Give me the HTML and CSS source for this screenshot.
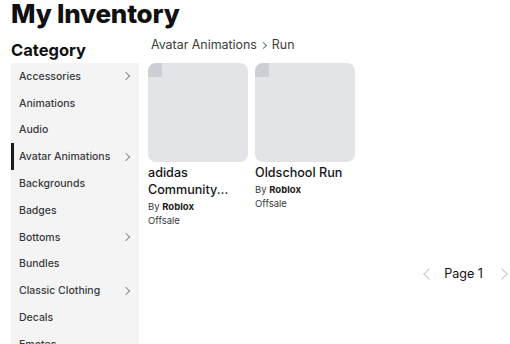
FILE: index.html
```html
<!DOCTYPE html>
<html lang="en">
<head>
    <meta charset="UTF-8">
    <meta name="viewport" content="width=device-width, initial-scale=1.0">
    <title>My Inventory</title>
    <link rel="stylesheet" href="styles.css">
</head>
<body>
    <div class="page">
        <h1>My Inventory</h1>

        <div class="layout">
            <aside class="sidebar">
                <h2>Category</h2>
                <ul class="category-list">
                    <li>Accessories <span class="chevron"></span></li>
                    <li>Animations</li>
                    <li>Audio</li>
                    <li class="active">Avatar Animations <span class="chevron"></span></li>
                    <li>Backgrounds</li>
                    <li>Badges</li>
                    <li>Bottoms <span class="chevron"></span></li>
                    <li>Bundles</li>
                    <li>Classic Clothing <span class="chevron"></span></li>
                    <li>Decals</li>
                    <li>Emotes</li>
                </ul>
            </aside>

            <main class="content">
                <div class="breadcrumb">
                    <span>Avatar Animations</span>
                    <span class="crumb-sep"></span>
                    <span>Run</span>
                </div>

                <div class="item-grid">
                    <div class="item-card">
                        <div class="thumb"><span class="thumb-corner"></span></div>
                        <div class="item-name">adidas Community...</div>
                        <div class="item-creator">By <strong>Roblox</strong></div>
                        <div class="item-price">Offsale</div>
                    </div>
                    <div class="item-card">
                        <div class="thumb"><span class="thumb-corner"></span></div>
                        <div class="item-name">Oldschool Run</div>
                        <div class="item-creator">By <strong>Roblox</strong></div>
                        <div class="item-price">Offsale</div>
                    </div>
                </div>

                <div class="pager">
                    <span class="pager-arrow prev"></span>
                    <span class="pager-label">Page 1</span>
                    <span class="pager-arrow next"></span>
                </div>
            </main>
        </div>
    </div>
</body>
</html>
```

FILE: styles.css
```css
:root {
    --text-dark: #121215;
    --text-mid: #393b3d;
    --sidebar-bg: #f4f4f5;
    --thumb-bg: #e3e4e8;
    --thumb-corner: #cdcfd5;
    --muted: #c4c6ca;
}

* {
    margin: 0;
    padding: 0;
    box-sizing: border-box;
}

body {
    font-family: 'Inter', 'Noto Sans', sans-serif;
    background: #ffffff;
    color: var(--text-dark);
    overflow: hidden;
}

.page {
    padding: 0 0 0 11px;
}

h1 {
    font-size: 26px;
    font-weight: 800;
    line-height: 28px;
    letter-spacing: -0.2px;
    color: #101012;
}

.layout {
    display: flex;
    gap: 9px;
    margin-top: 12px;
}

.sidebar {
    width: 128px;
    flex-shrink: 0;
}

.sidebar h2 {
    font-size: 16.5px;
    font-weight: 700;
    line-height: 20px;
    color: #101012;
}

.category-list {
    list-style: none;
    background: var(--sidebar-bg);
    margin-top: 3px;
    height: 300px;
}

.category-list li {
    height: 26.8px;
    display: flex;
    align-items: center;
    justify-content: space-between;
    padding: 0 10px 0 5px;
    font-size: 10.5px;
    font-weight: 500;
    color: var(--text-mid);
    border-left: 3px solid transparent;
}

.category-list li.active {
    border-left-color: #1b1b1d;
}

.chevron {
    width: 6px;
    height: 6px;
    border-top: 1px solid #8a8c90;
    border-right: 1px solid #8a8c90;
    transform: rotate(45deg);
}

.content {
    flex: 1;
}

.breadcrumb {
    display: flex;
    align-items: center;
    gap: 4px;
    padding-left: 3px;
    font-size: 12.4px;
    line-height: 18px;
    color: var(--text-mid);
    margin-top: -4px;
}

.crumb-sep {
    width: 5px;
    height: 5px;
    border-top: 1px solid #6b6d70;
    border-right: 1px solid #6b6d70;
    transform: rotate(45deg);
    margin: 0 2px 0 0;
}

.item-grid {
    display: flex;
    gap: 7px;
    margin-top: 9px;
}

.item-card {
    width: 100px;
}

.thumb {
    position: relative;
    width: 100px;
    height: 99px;
    background: var(--thumb-bg);
    border-radius: 8px;
    overflow: hidden;
}

.thumb-corner {
    position: absolute;
    top: 0;
    left: 0;
    width: 14px;
    height: 14px;
    background: var(--thumb-corner);
}

.item-name {
    margin-top: 2px;
    font-size: 12.6px;
    font-weight: 500;
    line-height: 17px;
    color: #141416;
}

.item-creator,
.item-price {
    font-size: 9.5px;
    line-height: 14px;
    color: var(--text-mid);
}

.item-creator {
    margin-top: 2px;
}

.item-creator strong {
    font-weight: 700;
    color: #1f2022;
}

.pager {
    display: flex;
    align-items: center;
    justify-content: flex-end;
    gap: 15px;
    margin-top: 38px;
    padding-right: 4px;
}

.pager-label {
    font-size: 12.6px;
    color: var(--text-dark);
}

.pager-arrow {
    width: 8px;
    height: 8px;
    border-top: 1.3px solid var(--muted);
    border-right: 1.3px solid var(--muted);
}

.pager-arrow.prev {
    transform: rotate(-135deg);
    margin-right: -4px;
}

.pager-arrow.next {
    transform: rotate(45deg);
}
```
